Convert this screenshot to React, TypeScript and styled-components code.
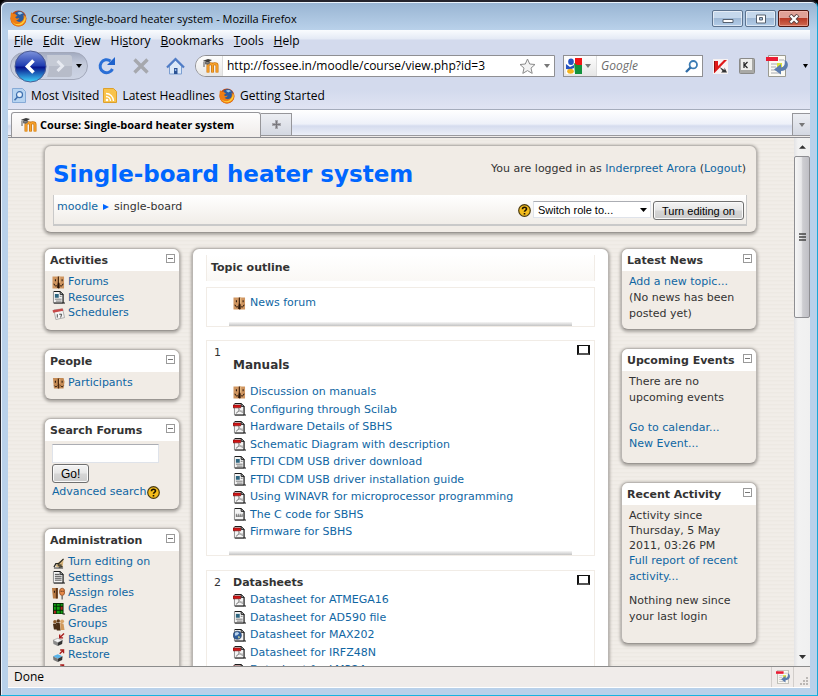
import React from 'react';
import styled, { createGlobalStyle, css } from 'styled-components';

const UI = `'Open Sans', 'Noto Sans', sans-serif`;
const PAGE = `'DejaVu Sans', Verdana, sans-serif`;
const FORM = `'Liberation Sans', Arial, sans-serif`;
const LINK = '#0f66a3';

const Global = createGlobalStyle`
  *, *::before, *::after { box-sizing: border-box; }
  body { margin: 0; background: #000; }
  ul, h1, h2, h3, p { margin: 0; padding: 0; }
  ul { list-style: none; }
  a { color: ${LINK}; text-decoration: none; }
  svg { display: block; flex: none; }
  button, input, select { font: inherit; color: inherit; margin: 0; }
`;

/* ---------- window frame ---------- */

const Frame = styled.div`
  height: 100vh;
  display: flex;
  flex-direction: column;
  padding: 0 7px 7px;
  overflow: hidden;
  border: 1px solid #25242c;
  border-right-color: #18a8d8;
  border-bottom-color: #18b4e0;
  border-top-width: 2px;
  border-radius: 7px 7px 0 0;
  background: linear-gradient(#98b4d2 0, #b9d1ea 28px, #b9d1ea 100%);
  box-shadow: inset 1px 1px 0 #eaf3fc;
  font: 11px/16px ${UI};
  color: #000;
`;

const TitleBar = styled.header`
  display: flex;
  align-items: center;
  gap: 4px;
  height: 28px;
  padding: 5px 1px 0 2px;
  flex: none;
`;

const WindowTitle = styled.span`
  flex: 1;
  white-space: nowrap;
`;

const WindowButtons = styled.div`
  display: flex;
  gap: 2px;
`;

const WindowButton = styled.button<{ $close?: boolean }>`
  display: grid;
  place-items: center;
  width: 31px;
  height: 17px;
  padding: 0;
  border: 1px solid #5c738f;
  border-radius: 2px;
  box-shadow: inset 0 0 0 1px rgba(255, 255, 255, 0.55);
  background: linear-gradient(#c5d8ec 0 45%, #9fb9d6 50%, #b3cde8 100%);
  ${(p) =>
    p.$close &&
    css`
      border-color: #4e1610;
      box-shadow: inset 0 0 0 1px rgba(255, 200, 190, 0.5);
      background: linear-gradient(#e0a197 0 45%, #b83a26 50%, #cf6a52 100%);
    `}
`;

const Client = styled.div`
  flex: 1;
  min-height: 0;
  display: flex;
  flex-direction: column;
  background: #f0ecea;
`;

/* ---------- browser chrome ---------- */

const Chrome = styled.div`
  flex: none;
  background: linear-gradient(#fafcfe 0, #e4eaf5 9px, #d3daed 10px, #d3daed 60px, #e0e4f3 100%);
  border-bottom: 1px solid #a5acbc;
`;

const MenuBar = styled.nav`
  display: flex;
  gap: 10px;
  height: 20px;
  padding: 1px 6px 0;
`;

const MenuItem = styled.button`
  padding: 0;
  border: 0;
  background: none;
  font-size: 12px;
  &::first-letter {
    text-decoration: underline;
  }
`;

const PlainMenuItem = styled(MenuItem)`
  &::first-letter {
    text-decoration: none;
  }
`;

const NavBar = styled.div`
  display: flex;
  align-items: center;
  height: 32px;
  padding: 0 2px;
`;

const NavIcons = styled.div`
  display: flex;
  align-items: center;
  gap: 16px;
  margin-right: 10px;
`;

const IconButton = styled.button`
  padding: 0;
  border: 0;
  background: none;
`;

const HistoryPill = styled.div`
  display: flex;
  align-items: center;
  width: 78px;
  height: 28px;
  padding-left: 3px;
  margin-right: -6px;
  border-radius: 14px;
  border: 1px solid #a2a8ba;
  background: linear-gradient(#a3abc0, #c3cadb 40%, #cdd4e4);
`;

const RecentPages = styled(IconButton)`
  padding-left: 4px;
`;

const Field = styled.div`
  display: flex;
  align-items: center;
  height: 22px;
  border: 1px solid #8f8f93;
  background: #fff;
  overflow: hidden;
`;

const UrlField = styled(Field)`
  flex: 1;
  margin-right: 8px;
  border-radius: 11px 0 0 11px;
`;

const SearchField = styled(Field)`
  width: 140px;
  margin-right: 10px;
`;

const SiteBadge = styled.span`
  display: grid;
  place-items: center;
  align-self: stretch;
  width: 27px;
  padding-left: 3px;
  background: linear-gradient(#fdfdfd, #e6e6e6);
  border-right: 1px solid #ddd;
`;

const EngineButton = styled.button`
  display: flex;
  align-items: center;
  gap: 3px;
  align-self: stretch;
  width: 33px;
  padding: 0 2px;
  border: 0;
  border-right: 1px solid #ddd;
  background: linear-gradient(#fdfdfd, #e6e6e6);
`;

const EngineDrop = styled(IconButton)`
  padding: 0 4px 0 8px;
`;

const SearchGo = styled(IconButton)`
  padding-right: 4px;
`;

const TextBox = styled.input`
  flex: 1;
  min-width: 0;
  border: 0;
  outline: 0;
  padding: 0 4px;
  background: none;
  font-size: 12px;
  &::placeholder {
    color: #6d6d6d;
    font-style: italic;
    opacity: 1;
  }
`;

const AddOns = styled.div`
  display: flex;
  align-items: center;
  gap: 11px;
`;

const BookmarkBar = styled.div`
  display: flex;
  align-items: center;
  gap: 4px;
  height: 27px;
  padding-left: 4px;
`;

const Bookmark = styled.a`
  display: flex;
  align-items: center;
  gap: 5px;
  color: #000;
  font-size: 12px;
  white-space: nowrap;
`;

const TabStrip = styled.div`
  display: flex;
  align-items: flex-end;
  flex: none;
  height: 28px;
  padding-left: 3px;
  border-bottom: 1px solid #8d8d92;
  background: linear-gradient(#fff 0, #eef1f9 14px, #d5dcee 16px, #eceff8 25px, #9a9a9e 25px, #9a9a9e 26px, #f0ecea 26px);
`;

const Tab = styled.button`
  display: flex;
  align-items: center;
  gap: 3px;
  width: 250px;
  height: 25px;
  padding: 0 0 0 9px;
  border: 1px solid #96969a;
  border-bottom: 0;
  border-radius: 3px 3px 0 0;
  background: linear-gradient(#fdfdfd, #f0ecea);
  font-weight: 700;
  white-space: nowrap;
`;

const SmallTab = styled.button<{ $end?: boolean }>`
  display: grid;
  place-items: center;
  width: ${(p) => (p.$end ? 18 : 31)}px;
  height: 23px;
  margin-bottom: 1px;
  margin-left: ${(p) => (p.$end ? 'auto' : 0)};
  padding: 0;
  border: 1px solid #96969a;
  border-left-width: ${(p) => (p.$end ? 1 : 0)}px;
  border-right-width: ${(p) => (p.$end ? 0 : 1)}px;
  background: linear-gradient(#eceef3, #d4d8e2);
`;

const StatusBar = styled.footer`
  display: flex;
  align-items: center;
  flex: none;
  height: 22px;
  padding-left: 6px;
  border-top: 1px solid #8c8c8c;
  border-bottom: 1px solid #fff;
  background: #f0ecea;
`;

const StatusText = styled.span`
  flex: 1;
  font-size: 12px;
`;

const StatusCell = styled.span`
  display: grid;
  place-items: center;
  align-self: stretch;
  width: 23px;
  border-left: 1px solid #d2cecb;
  border-right: 1px solid #d2cecb;
`;

const ResizeCell = styled.span`
  display: flex;
  align-items: flex-end;
  justify-content: flex-end;
  align-self: stretch;
  width: 16px;
  padding: 2px;
`;

/* ---------- viewport ---------- */

const Viewport = styled.div`
  flex: 1;
  min-height: 0;
  display: flex;
  overflow: hidden;
`;

const Page = styled.div`
  flex: 1;
  min-width: 0;
  padding: 7px 37px 0 36px;
  background: repeating-linear-gradient(#f1ede8 0 2px, #ede9e3 2px 3px, #efebe6 3px 4px);
  font: 11px/16px ${PAGE};
  color: #333;
`;

const ScrollBar = styled.div`
  display: flex;
  flex-direction: column;
  width: 16px;
  background: linear-gradient(90deg, #e3e3e5, #f2f2f2 4px, #f0f0f0);
`;

const ScrollButton = styled.button`
  display: grid;
  place-items: center;
  height: 18px;
  padding: 0;
  border: 0;
  background: none;
`;

const ScrollTrack = styled.div`
  flex: 1;
`;

const ScrollThumb = styled.div`
  display: grid;
  place-items: center;
  height: 162px;
  border: 1px solid #8e8e92;
  border-radius: 2px;
  background: linear-gradient(90deg, #f6f6f6, #e8e8ea 45%, #cdcdd1 55%, #bfbfc5);
`;

/* ---------- Moodle page ---------- */

const panel = css`
  border: 1px solid #bab6b2;
  border-bottom-color: #9a9692;
  border-radius: 7px;
  box-shadow: 0 1px 3px 1px #aca8a3;
`;

const PageHeader = styled.header`
  ${panel}
  height: 88px;
  padding: 0 9px 0 8px;
  margin-bottom: 15px;
  background: #f1ece6;
`;

const HeaderTop = styled.div`
  display: flex;
  justify-content: space-between;
  height: 49px;
`;

const CourseTitle = styled.h1`
  padding-top: 12px;
  font-size: 23px;
  line-height: 32px;
  color: #06f;
  white-space: nowrap;
`;

const LoginInfo = styled.p`
  padding: 15px 1px 0 0;
  white-space: nowrap;
`;

const Crumbs = styled.div`
  display: flex;
  align-items: center;
  height: 31px;
  padding: 0 2px 0 3px;
  border: 1px solid #c9c9c9;
  border-top: 0;
  border-bottom-width: 2px;
  background: linear-gradient(#fff, #f1ede8);
`;

const Trail = styled.nav`
  flex: 1;
  display: flex;
  align-items: center;
  gap: 5px;
  padding-bottom: 5px;
`;

const RoleForm = styled.form`
  display: flex;
  align-items: center;
  gap: 2px;
  margin-top: 2px;
  font: 11px/14px ${FORM};
  color: #000;
`;

const SelectBox = styled.span`
  display: grid;
  align-items: center;
  margin-bottom: 2px;
  svg {
    grid-area: 1 / 1;
    justify-self: end;
    margin-right: 4px;
    pointer-events: none;
  }
`;

const Select = styled.select`
  grid-area: 1 / 1;
  appearance: none;
  width: 118px;
  height: 17px;
  padding: 0 4px;
  border: 1px solid #dfe3ea;
  border-top-color: #abadb3;
  border-radius: 0;
  background: #fff;
`;

const Button = styled.button<{ $wide?: boolean }>`
  height: 19px;
  padding: 0 8px;
  border: 1px solid #707070;
  border-radius: 3px;
  background: linear-gradient(#f4f4f4, #e6e6e6 48%, #d6d6d6 52%, #cbcbcb);
  box-shadow: inset 0 0 0 1px #fafafa;
  font: 11px/14px ${FORM};
  font-size: ${(p) => (p.$wide ? 11 : 12)}px;
  color: #000;
  white-space: nowrap;
`;

const Columns = styled.div`
  display: grid;
  grid-template-columns: 136px minmax(0, 1fr) 136px;
  gap: 12px;
  align-items: start;
`;

const SideColumn = styled.div`
  display: flex;
  flex-direction: column;
  gap: 18px;
`;

const Block = styled.section<{ $min?: number }>`
  ${panel}
  min-height: ${(p) => p.$min ?? 0}px;
  background: #f1ece6;
  overflow: hidden;
`;

const BlockHead = styled.div`
  display: flex;
  align-items: center;
  justify-content: space-between;
  height: 22px;
  padding: 0 4px 0 5px;
  background: #fff;
`;

const BlockTitle = styled.h2`
  padding-top: 1px;
  font-size: 11px;
  line-height: 22px;
  white-space: nowrap;
`;

const Collapse = styled.button`
  display: grid;
  place-items: center;
  width: 9px;
  height: 9px;
  margin-bottom: 3px;
  padding: 0;
  border: 1px solid #9a9a9a;
  background: #fff;
  &::before {
    content: '';
    width: 5px;
    height: 1px;
    background: #777;
  }
`;

const BlockBody = styled.div`
  padding: 3px 6px 0 7px;
`;

const SideList = styled.ul``;

const SideItem = styled.li`
  display: flex;
  align-items: center;
  gap: 3px;
  height: 16px;
  white-space: nowrap;
  &:nth-child(even) {
    height: 15px;
  }
`;

const Para = styled.p<{ $gap?: number; $tight?: boolean }>`
  margin-bottom: ${(p) => p.$gap ?? 0}px;
  line-height: ${(p) => (p.$tight ? 15 : 16)}px;
`;

const SearchForm = styled.form`
  display: flex;
  flex-direction: column;
  align-items: flex-start;
  gap: 1px;
`;

const SearchBox = styled.input`
  width: 107px;
  height: 19px;
  border: 1px solid #dfe3ea;
  border-top-color: #abadb3;
  background: #fff;
`;

const Advanced = styled.span`
  display: flex;
  align-items: center;
  gap: 1px;
  white-space: nowrap;
`;

const Main = styled.main`
  ${panel}
  height: 600px;
  padding: 6px 13px;
  background: #fff;
  overflow: hidden;
`;

const OutlineHead = styled.h2`
  height: 26px;
  padding-left: 4px;
  margin-bottom: 6px;
  border: solid #f1ece6;
  border-width: 0 1px;
  background: linear-gradient(#fff, #faf8f5);
  font-size: 11px;
  line-height: 26px;
`;

const Topic = styled.section<{ $after: number }>`
  display: grid;
  grid-template-columns: 22px minmax(0, 1fr) 22px;
  margin-bottom: ${(p) => p.$after}px;
  border: 1px solid #f1ece6;
`;

const TopicNumber = styled.span`
  padding: 4px 0 0 7px;
`;

const TopicBody = styled.div<{ $top: number }>`
  padding: ${(p) => p.$top}px 0 0 4px;
  &::after {
    content: '';
    display: block;
    height: 4px;
    margin: 10px 0 0 -4px;
    background: linear-gradient(#f6f6f6, #c4c4c4);
  }
`;

const TopicTitle = styled.h3<{ $large?: boolean }>`
  font-size: ${(p) => (p.$large ? 12 : 11)}px;
  line-height: 16px;
  margin-bottom: ${(p) => (p.$large ? 10 : 0)}px;
`;

const Resource = styled.li`
  display: flex;
  align-items: center;
  gap: 4px;
  height: 18px;
  white-space: nowrap;
  &:nth-child(even) {
    height: 17px;
  }
`;

const ShowOnly = styled.button`
  width: 13px;
  height: 10px;
  margin: 4px 0 0 5px;
  padding: 0;
  border: 2px solid #111;
  border-top-width: 1px;
  border-bottom: 2px solid #555;
  background: #fff;
`;

/* ---------- icons ---------- */

const Fox = ({ s = 16 }: { s?: number }) => (
  <svg width={s} height={s} viewBox="0 0 16 16">
    <circle cx="8" cy="8" r="7.5" fill="#c8480e" />
    <circle cx="8.6" cy="6.4" r="5.4" fill="#2c5c9e" />
    <path d="M7 2.5c2-1 4-.6 5 .8-1 .2-2 .4-2.4 1.2-1-.5-2-.6-2.6-2z" fill="#9cc9ea" />
    <path d="M1 2.2l2.4 1.6L5 3.4c.3 1 .8 1.5 2 1.8-.6.8-1.600 1-2 1.600.3 1.200 2 1.600 3.800.8-.6 1.600-2 2.200-3.200 1.900C7.300 12 11 11.600 12.400 9c.8-1.600.5-3.300-.2-4.500 2.300 1 3.300 3 2.900 5.100-.6 3.400-3.700 5.900-7.300 5.800C3.700 15.300.5 12.100.5 8c0-2.300.2-4 .5-5.800z" fill="#ee7d14" />
    <path d="M14 5c1.500 3 .3 6.500-2.500 8.300C8 15.300 3.500 14 2 10.500 4 13.500 8 14 10.700 12 13 10.300 14 8 14 5z" fill="#fbd03c" />
  </svg>
);

const MoodleMark = () => (
  <svg width="16" height="14" viewBox="0 0 16 14">
    <path d="M5 13.500V6.500c0-2.400 4.500-2.400 4.500 0v7M9.500 6.500c0-2.400 4.500-2.400 4.500 0v7" fill="none" stroke="#c8740e" strokeWidth="3" />
    <path d="M5 13.500V6.500c0-2.400 4.500-2.400 4.500 0v7M9.500 6.500c0-2.400 4.500-2.400 4.500 0v7" fill="none" stroke="#f9a32c" strokeWidth="1.600" />
    <path d="M0 1.800L5 0l4 1-4 2.500z" fill="#3c3c3c" />
    <path d="M2 2.800v2.400l3 .6 2-1.600V2.300L5 3.500z" fill="#6c6c6c" />
    <path d="M1 2.500V8" stroke="#555" />
  </svg>
);

const Back = () => (
  <svg width="33" height="33" viewBox="0 0 33 33">
    <defs>
      <linearGradient id="ball" x2="0" y2="1">
        <stop offset="0" stopColor="#7e94dc" />
        <stop offset=".48" stopColor="#1f3cb0" />
        <stop offset=".52" stopColor="#06128c" />
        <stop offset="1" stopColor="#3fd4fa" />
      </linearGradient>
    </defs>
    <circle cx="16.5" cy="16.5" r="15.5" fill="url(#ball)" stroke="#4a5a92" />
    <path d="M19.500 10.500l-6 6 6 6" fill="none" stroke="#fff" strokeWidth="3.600" />
  </svg>
);

const Forward = () => (
  <svg width="25" height="22" viewBox="0 0 25 22">
    <path d="M0 0h22q3 0 3 3v16q0 3-3 3H0q4-11 0-22z" fill="#b7bcc9" />
    <path d="M0 11q1-6 0-11h22q3 0 3 3v8z" fill="#c5cad5" />
    <path d="M10.500 6l5 5-5 5" fill="none" stroke="#e7eaf1" strokeWidth="3" />
  </svg>
);

const Caret = ({ c = '#000', w = 7 }: { c?: string; w?: number }) => (
  <svg width={w} height="4" viewBox="0 0 8 4" preserveAspectRatio="none">
    <path d="M0 0h8L4 4z" fill={c} />
  </svg>
);

const Reload = () => (
  <svg width="18" height="18" viewBox="0 0 18 18">
    <path d="M14.500 12A6.500 6.500 0 1 1 12.500 4" fill="none" stroke="#2a6fd6" strokeWidth="3" />
    <path d="M17 0v8H9z" fill="#1f62cc" />
  </svg>
);

const Stop = () => (
  <svg width="18" height="18" viewBox="0 0 18 18">
    <path d="M2.500 2.500l13 13M15.500 2.500l-13 13" stroke="#a6a8ae" strokeWidth="3.400" />
  </svg>
);

const Home = () => (
  <svg width="19" height="18" viewBox="0 0 19 18">
    <path d="M3.500 9v8h12V9l-6-6z" fill="#dbe8f8" stroke="#7c9fd2" />
    <path d="M1 10.500l8.500-8.500 8.500 8.500" fill="none" stroke="#4f7cc6" strokeWidth="2.200" />
    <path d="M8 11h3.500v6H8z" fill="#2a5295" />
    <path d="M8.800 12h1.500v2H8.800z" fill="#9dbbe6" />
  </svg>
);

const Star = () => (
  <svg width="17" height="17" viewBox="0 0 17 17">
    <path d="M8.500 1l2.200 5 5.300.5-4 3.600 1.200 5.300-4.700-2.800-4.700 2.800L5 10.100 1 6.500 6.300 6z" fill="#f3f3f3" stroke="#8a8a8a" strokeLinejoin="round" />
  </svg>
);

const GoogleMark = () => (
  <svg width="16" height="16" viewBox="0 0 16 16">
    <path d="M0 0h16v16H0z" fill="#fff" />
    <path d="M9 0h7v7H9z" fill="#f01414" />
    <path d="M8 5l3 2h5v9H9z" fill="#12923c" />
    <ellipse cx="5" cy="3.800" rx="2.800" ry="3.300" fill="#2452c0" />
    <path d="M0 6l4 3 4-2v3l-4 1.500L0 11z" fill="#2452c0" />
    <ellipse cx="4.500" cy="13.300" rx="3.300" ry="2.500" fill="#f5b31c" />
  </svg>
);

const Magnifier = () => (
  <svg width="13" height="13" viewBox="0 0 13 13">
    <circle cx="8.300" cy="4.700" r="3.700" fill="#fff" stroke="#3c7cb4" strokeWidth="1.800" />
    <path d="M5.500 7.500L1 12" stroke="#2f6ca6" strokeWidth="2.400" />
  </svg>
);

const Kasper = () => (
  <svg width="15" height="15" viewBox="0 0 15 15">
    <path d="M0 0h15v15H0z" fill="#f7f2f2" />
    <path d="M1 2h4v5L11 1h3L1.500 14H1z" fill="#e01818" />
    <path d="M1 2h1v10l-1 1z" fill="#8e1010" />
    <path d="M6.500 8l5 3V8.500L14 13.500H8l1.500-1.500z" fill="#333" />
  </svg>
);

const KeyIcon = () => (
  <svg width="16" height="16" viewBox="0 0 16 16">
    <rect x=".5" y=".5" width="15" height="15" rx="1" fill="#a9a9a6" stroke="#8a8a88" />
    <path d="M2 1h11v11H2z" fill="#efefec" />
    <path d="M5 4v6M8.500 4L5.500 7l3 3" fill="none" stroke="#222" strokeWidth="1.200" />
  </svg>
);

const PageArrow = ({ s = 22 }: { s?: number }) => (
  <svg width={s} height={s} viewBox="0 0 22 22">
    <path d="M2.500.5h17v21h-17z" fill="#fbfaf4" stroke="#9b9b92" />
    <path d="M5 9h6M5 12h5M5 15h6M5 18h9M13 5h5" stroke="#a8aab0" />
    <path d="M11 8h5v5h-5z" fill="#dbe23c" />
    <path d="M0 2h12v4H0z" fill="#ea1c34" />
    <path d="M18.500 5c3 1 4 4 3 7-1 2.500-3.500 4-6.500 4v3.500L8 14.500 15 9v3.500c3 0 4.500-3 3.500-7.500z" fill="#5c7dae" />
  </svg>
);

const MostVisited = () => (
  <svg width="14" height="15" viewBox="0 0 14 15">
    <path d="M.5.5h10l3 3v11H.5z" fill="#b7d4f1" stroke="#86aad6" />
    <circle cx="7.500" cy="6.700" r="3" fill="#e6f1fc" stroke="#3e6fae" strokeWidth="1.200" />
    <path d="M5.500 9l-3 3.200" stroke="#3e6fae" strokeWidth="1.600" />
  </svg>
);

const Feed = () => (
  <svg width="14" height="15" viewBox="0 0 14 15">
    <path d="M.5.5h10l3 3v11H.5z" fill="#f8c34c" stroke="#dda02c" />
    <circle cx="4" cy="12" r="1.300" fill="#fff" />
    <path d="M3 8.500a4.500 4.500 0 0 1 4.500 4.500M3 5.500A7.500 7.500 0 0 1 10.500 13" fill="none" stroke="#fff" strokeWidth="1.300" />
  </svg>
);

const Help = () => (
  <svg width="13" height="13" viewBox="0 0 13 13">
    <circle cx="6.500" cy="6.500" r="5.800" fill="#f5bd1c" stroke="#4a3a10" strokeWidth="1.200" />
    <path d="M4.500 5.200c0-2.600 4-2.400 4-.2 0 1.400-2 1.300-2 2.800M6.500 9v1.500" fill="none" stroke="#1c1400" strokeWidth="1.600" />
  </svg>
);

const Arrow = () => (
  <svg width="6" height="6" viewBox="0 0 6 6">
    <path d="M0 0l6 3-6 3z" fill="#06f" />
  </svg>
);

type Kind =
  | 'forum' | 'doc' | 'calendar' | 'people' | 'edit' | 'settings' | 'roles'
  | 'grades' | 'groups' | 'backup' | 'restore' | 'pdf' | 'text' | 'web';

const Sheet = () => (
  <>
    <path d="M1.500.5h7l3 3v9h-10z" fill="#f4f4f4" stroke="#8a8a8a" />
    <path d="M2 .5h6.500l3 3v9H2" fill="none" stroke="#151515" />
    <path d="M8.500.5v3h3" fill="none" stroke="#151515" />
    <path d="M11.500 12.500h2" stroke="#111" />
  </>
);

const art: Record<Kind, React.ReactNode> = {
  forum: (
    <>
      <path d="M.5.500h12v12.500h-12z" fill="#cf9560" />
      <path d="M6 .5h1.500V6L8 12.500H5L6 6z" fill="#4a2a14" />
      <path d="M3 3.500h1v2H3zM10 3.500h1v2h-1zM6.500 7h1v6h-1z" fill="#1c1008" />
      <path d="M2 8c.5 2.500 2.500 3 3.500 1.500M8 9.500c1 1.500 3 1 3.500-1.500" fill="none" stroke="#1c1008" />
      <path d="M7.500.5h1V7h-1z" fill="#f0c890" />
    </>
  ),
  people: (
    <>
      <path d="M1 1h11l1 4-1 7H2z" fill="#c48a54" />
      <path d="M6 1.500h1.500V12H6z" fill="#4a2a12" />
      <path d="M3 4h1v2H3zM10 4h1v2h-1z" fill="#1c1008" />
      <path d="M2.500 9c1 1.500 2 1.500 3 0M9 9c1 1.500 2 1.500 3 0" fill="none" stroke="#1c1008" />
      <path d="M7.500 2h1v5h-1z" fill="#f0c48c" />
    </>
  ),
  doc: (
    <>
      <Sheet />
      <path d="M3 3h4v4H3z" fill="#2f6680" />
      <path d="M8 5.500h2M3 8.500h7M4 10.500h6" stroke="#777" />
    </>
  ),
  text: (
    <>
      <Sheet />
      <path d="M3.500 6v3M5.500 6v3M7.500 6v3M9.500 6v3M3 8.500h7" stroke="#555" strokeWidth=".8" />
    </>
  ),
  settings: (
    <>
      <Sheet />
      <path d="M3 3.500h5M3 5.500h7M3 7.500h7M3 9.500h7" stroke="#444" />
    </>
  ),
  pdf: (
    <>
      <Sheet />
      <path d="M6 5c.5 3-1 5-3 6M6 6c1 2 2.500 3.500 4.500 4M3.500 10c2-1.500 4-2 7-1.500" fill="none" stroke="#8a8a8a" strokeWidth=".8" />
      <path d="M0 2h8v3H0z" fill="#d41414" stroke="#5c0a0a" strokeWidth=".6" />
    </>
  ),
  web: (
    <>
      <Sheet />
      <circle cx="4.500" cy="6.500" r="4.200" fill="#2d5c9c" stroke="#1d3350" strokeWidth=".6" />
      <path d="M2 4l2.500-1 2 1.500-2 2-2.500.5z" fill="#b9d2ea" />
      <path d="M5 7.500l2.500.5-1.500 2z" fill="#dfe28c" />
    </>
  ),
  calendar: (
    <>
      <path d="M2 3l9-1 2 9-9 2z" fill="#f6f6f6" stroke="#999" strokeWidth=".8" />
      <path d="M.5 3.500L11 1.500l.7 2.500L1.300 6z" fill="#c84a4a" />
      <path d="M5.500 7.500v3.500M7.500 7.500h2.500l-1 3.500" fill="none" stroke="#444" />
    </>
  ),
  edit: (
    <>
      <path d="M2 12.500h9.500" stroke="#333" />
      <path d="M4 10l2-3 5-3.500 1 .5-1 7.500H5z" fill="#d6b47c" />
      <path d="M2 11.500l2-3.500h3l5-5M6 9.500h4M7 11.500l4-.5" fill="none" stroke="#2a2a22" strokeWidth="1.300" />
    </>
  ),
  roles: (
    <>
      <path d="M0 1h6v11H1z" fill="#b87a44" />
      <path d="M4 1h2v11H4z" fill="#5b3418" />
      <ellipse cx="10.500" cy="5" rx="2.700" ry="3.800" fill="#e88a4a" stroke="#8a4a22" strokeWidth=".8" />
      <path d="M10 9h1v4h-1z" fill="#333" />
      <path d="M2 4h1v2H2zM9 4h1v1H9zM11 4h1v1h-1z" fill="#1c1008" />
    </>
  ),
  grades: (
    <>
      <path d="M1 1h11v11.500H1z" fill="#052c05" />
      <path d="M2 2h2v2H2zM5 2h3v2H5zM9 2h2v2H9zM2 5h2v3H2zM5 5h3v3H5zM5 9h3v3H5zM9 9h2v3H9z" fill="#12a012" />
      <path d="M9 5h2v3H9zM2 9h2v3H2z" fill="#b82020" />
      <path d="M11 12.500h2.500" stroke="#111" />
    </>
  ),
  groups: (
    <>
      <path d="M1 6h3l1 6H2zM4 5h4l1 8H5z" fill="#4a2e16" />
      <path d="M8.500 5l3.500 1 1 6.500H9z" fill="#d0985a" />
      <circle cx="3" cy="4" r="1.800" fill="#8a5a2c" />
      <circle cx="6.500" cy="3" r="1.800" fill="#5a3616" />
      <circle cx="10.500" cy="3.500" r="2" fill="#d8a468" />
    </>
  ),
  backup: (
    <>
      <path d="M1 7.500l5-2 5 2L6 10z" fill="#f4f4f4" stroke="#777" strokeWidth=".5" />
      <path d="M1 7.500L6 10v3.500l-4.500-2z" fill="#8a8a8a" />
      <path d="M6 10l5-2.500-.5 4L6 13.500z" fill="#333" />
      <path d="M12.500.5L8.500 4.500M8 1.500V5h3.500" fill="none" stroke="#a81e1e" strokeWidth="1.400" />
    </>
  ),
  restore: (
    <>
      <path d="M1 7.500l5-2 5 2L6 10z" fill="#5ab4ea" />
      <path d="M1 7.500L6 10v3.500l-4.500-2z" fill="#777" />
      <path d="M6 10l5-2.500-.5 4L6 13.500z" fill="#333" />
      <path d="M8 5l4-4M8.500 1H12v3.500" fill="none" stroke="#a81e1e" strokeWidth="1.400" />
    </>
  ),
};

const Glyph = ({ kind }: { kind: Kind }) => (
  <svg width="13" height="13" viewBox="0 0 13.500 13.500">
    {art[kind]}
  </svg>
);

/* ---------- content ---------- */

const activities: [Kind, string][] = [
  ['forum', 'Forums'],
  ['doc', 'Resources'],
  ['calendar', 'Schedulers'],
];
const people: [Kind, string][] = [['people', 'Participants']];
const admin: [Kind, string][] = [
  ['edit', 'Turn editing on'],
  ['settings', 'Settings'],
  ['roles', 'Assign roles'],
  ['grades', 'Grades'],
  ['groups', 'Groups'],
  ['backup', 'Backup'],
  ['restore', 'Restore'],
  ['restore', 'Import'],
];
const manuals: [Kind, string][] = [
  ['forum', 'Discussion on manuals'],
  ['pdf', 'Configuring through Scilab'],
  ['pdf', 'Hardware Details of SBHS'],
  ['pdf', 'Schematic Diagram with description'],
  ['doc', 'FTDI CDM USB driver download'],
  ['doc', 'FTDI CDM USB driver installation guide'],
  ['pdf', 'Using WINAVR for microprocessor programming'],
  ['text', 'The C code for SBHS'],
  ['pdf', 'Firmware for SBHS'],
];
const datasheets: [Kind, string][] = [
  ['pdf', 'Datasheet for ATMEGA16'],
  ['doc', 'Datasheet for AD590 file'],
  ['web', 'Datasheet for MAX202'],
  ['pdf', 'Datasheet for IRFZ48N'],
  ['pdf', 'Datasheet for LM324'],
];

const SideLinks = ({ items }: { items: [Kind, string][] }) => (
  <SideList>
    {items.map(([kind, label]) => (
      <SideItem key={label}>
        <Glyph kind={kind} />
        <a href="#">{label}</a>
      </SideItem>
    ))}
  </SideList>
);

const Resources = ({ items }: { items: [Kind, string][] }) => (
  <ul>
    {items.map(([kind, label]) => (
      <Resource key={label}>
        <Glyph kind={kind} />
        <a href="#">{label}</a>
      </Resource>
    ))}
  </ul>
);

const SideBlock = ({ title, min, children }: { title: string; min?: number; children: React.ReactNode }) => (
  <Block $min={min}>
    <BlockHead>
      <BlockTitle>{title}</BlockTitle>
      <Collapse type="button" aria-label={`Hide ${title} block`} />
    </BlockHead>
    <BlockBody>{children}</BlockBody>
  </Block>
);

export default function App() {
  return (
    <>
      <Global />
      <Frame>
        <TitleBar>
          <Fox s={17} />
          <WindowTitle>Course: Single-board heater system - Mozilla Firefox</WindowTitle>
          <WindowButtons>
            <WindowButton aria-label="Minimize">
              <svg width="12" height="10" viewBox="0 0 12 10"><path d="M1 5.500h10v3H1z" fill="#fff" stroke="#55606e" /></svg>
            </WindowButton>
            <WindowButton aria-label="Maximize">
              <svg width="12" height="10" viewBox="0 0 12 10"><path d="M1.500 1h9v8h-9z" fill="#fff" stroke="#55606e" /><path d="M4.500 3.500h3v2.500h-3z" fill="#9fb9d6" stroke="#55606e" /></svg>
            </WindowButton>
            <WindowButton $close aria-label="Close">
              <svg width="12" height="10" viewBox="0 0 12 10"><path d="M2 1l8 8M10 1L2 9" stroke="#5c4444" strokeWidth="4" /><path d="M2.500 1.500l7 7M9.500 1.500l-7 7" stroke="#fff" strokeWidth="2.200" /></svg>
            </WindowButton>
          </WindowButtons>
        </TitleBar>

        <Client>
          <Chrome>
            <MenuBar>
              <MenuItem>File</MenuItem>
              <MenuItem>Edit</MenuItem>
              <MenuItem>View</MenuItem>
              <PlainMenuItem>Hi<u>s</u>tory</PlainMenuItem>
              <MenuItem>Bookmarks</MenuItem>
              <MenuItem>Tools</MenuItem>
              <MenuItem>Help</MenuItem>
            </MenuBar>
            <NavBar>
              <NavIcons>
                <HistoryPill>
                  <IconButton aria-label="Back"><Back /></IconButton>
                  <IconButton aria-label="Forward"><Forward /></IconButton>
                  <RecentPages aria-label="Recent pages"><Caret w={6} /></RecentPages>
                </HistoryPill>
                <IconButton aria-label="Reload"><Reload /></IconButton>
                <IconButton aria-label="Stop"><Stop /></IconButton>
                <IconButton aria-label="Home"><Home /></IconButton>
              </NavIcons>
              <UrlField>
                <SiteBadge><MoodleMark /></SiteBadge>
                <TextBox aria-label="Location" defaultValue="http://fossee.in/moodle/course/view.php?id=3" />
                <IconButton aria-label="Bookmark this page"><Star /></IconButton>
                <EngineDrop aria-label="Show history"><Caret c="#777" w={6} /></EngineDrop>
              </UrlField>
              <SearchField>
                <EngineButton aria-label="Search engine"><GoogleMark /><Caret c="#777" w={6} /></EngineButton>
                <TextBox aria-label="Search" placeholder="Google" />
                <SearchGo aria-label="Search"><Magnifier /></SearchGo>
              </SearchField>
              <AddOns>
                <IconButton aria-label="Kaspersky"><Kasper /></IconButton>
                <IconButton aria-label="Virtual keyboard"><KeyIcon /></IconButton>
                <IconButton aria-label="Convert page"><PageArrow /></IconButton>
                <RecentPages aria-label="More"><Caret w={5} /></RecentPages>
              </AddOns>
            </NavBar>
            <BookmarkBar>
              <Bookmark href="#"><MostVisited />Most Visited</Bookmark>
              <Bookmark href="#"><Feed />Latest Headlines</Bookmark>
              <Bookmark href="#"><Fox />Getting Started</Bookmark>
            </BookmarkBar>
          </Chrome>

          <TabStrip>
            <Tab><MoodleMark />Course: Single-board heater system</Tab>
            <SmallTab aria-label="New tab">
              <svg width="9" height="9" viewBox="0 0 9 9"><path d="M4.500 0v9M0 4.500h9" stroke="#a8a8ae" strokeWidth="3" /><path d="M4.500 1v7M1 4.500h7" stroke="#77777c" /></svg>
            </SmallTab>
            <SmallTab $end aria-label="List all tabs"><Caret c="#777" w={6} /></SmallTab>
          </TabStrip>

          <Viewport>
            <Page>
              <PageHeader>
                <HeaderTop>
                  <CourseTitle>Single-board heater system</CourseTitle>
                  <LoginInfo>
                    You are logged in as <a href="#">Inderpreet Arora</a> (<a href="#">Logout</a>)
                  </LoginInfo>
                </HeaderTop>
                <Crumbs>
                  <Trail>
                    <a href="#">moodle</a>
                    <Arrow />
                    <span>single-board</span>
                  </Trail>
                  <RoleForm>
                    <Help />
                    <SelectBox>
                      <Select aria-label="Switch role" defaultValue="role">
                        <option value="role">Switch role to...</option>
                      </Select>
                      <Caret />
                    </SelectBox>
                    <Button $wide type="button">Turn editing on</Button>
                  </RoleForm>
                </Crumbs>
              </PageHeader>

              <Columns>
                <SideColumn>
                  <SideBlock title="Activities" min={83}><SideLinks items={activities} /></SideBlock>
                  <SideBlock title="People" min={51}><SideLinks items={people} /></SideBlock>
                  <SideBlock title="Search Forums" min={92}>
                    <SearchForm>
                      <SearchBox aria-label="Search forums" />
                      <Button type="button">Go!</Button>
                      <Advanced><a href="#">Advanced search</a><Help /></Advanced>
                    </SearchForm>
                  </SideBlock>
                  <SideBlock title="Administration"><SideLinks items={admin} /></SideBlock>
                </SideColumn>

                <Main>
                  <OutlineHead>Topic outline</OutlineHead>
                  <Topic $after={13}>
                    <TopicNumber />
                    <TopicBody $top={6}>
                      <Resources items={[['forum', 'News forum']]} />
                    </TopicBody>
                  </Topic>
                  <Topic $after={14}>
                    <TopicNumber>1</TopicNumber>
                    <TopicBody $top={16}>
                      <TopicTitle $large>Manuals</TopicTitle>
                      <Resources items={manuals} />
                    </TopicBody>
                    <ShowOnly aria-label="Show only topic 1" />
                  </Topic>
                  <Topic $after={14}>
                    <TopicNumber>2</TopicNumber>
                    <TopicBody $top={4}>
                      <TopicTitle>Datasheets</TopicTitle>
                      <Resources items={datasheets} />
                    </TopicBody>
                    <ShowOnly aria-label="Show only topic 2" />
                  </Topic>
                </Main>

                <SideColumn>
                  <SideBlock title="Latest News" min={82}>
                    <Para><a href="#">Add a new topic...</a></Para>
                    <Para>(No news has been posted yet)</Para>
                  </SideBlock>
                  <SideBlock title="Upcoming Events" min={116}>
                    <Para $gap={14}>There are no upcoming events</Para>
                    <Para><a href="#">Go to calendar...</a></Para>
                    <Para><a href="#">New Event...</a></Para>
                  </SideBlock>
                  <SideBlock title="Recent Activity" min={162}>
                    <Para $tight>Activity since Thursday, 5 May 2011, 03:26 PM</Para>
                    <Para $gap={8}><a href="#">Full report of recent activity...</a></Para>
                    <Para>Nothing new since your last login</Para>
                  </SideBlock>
                </SideColumn>
              </Columns>
            </Page>
            <ScrollBar>
              <ScrollButton aria-label="Scroll up">
                <svg width="7" height="4" viewBox="0 0 8 4"><path d="M0 4h8L4 0z" fill="#333" /></svg>
              </ScrollButton>
              <ScrollTrack>
                <ScrollThumb>
                  <svg width="7" height="9" viewBox="0 0 7 9"><path d="M0 1h7M0 4h7M0 7h7" stroke="#444" strokeWidth="1.400" /></svg>
                </ScrollThumb>
              </ScrollTrack>
              <ScrollButton aria-label="Scroll down"><Caret c="#333" /></ScrollButton>
            </ScrollBar>
          </Viewport>

          <StatusBar>
            <StatusText>Done</StatusText>
            <StatusCell><PageArrow s={14} /></StatusCell>
            <ResizeCell>
              <svg width="9" height="9" viewBox="0 0 9 9"><path d="M7 1h2v2H7zM4 4h2v2H4zM7 4h2v2H7zM1 7h2v2H1zM4 7h2v2H4zM7 7h2v2H7z" fill="#bcb8b5" /></svg>
            </ResizeCell>
          </StatusBar>
        </Client>
      </Frame>
    </>
  );
}
